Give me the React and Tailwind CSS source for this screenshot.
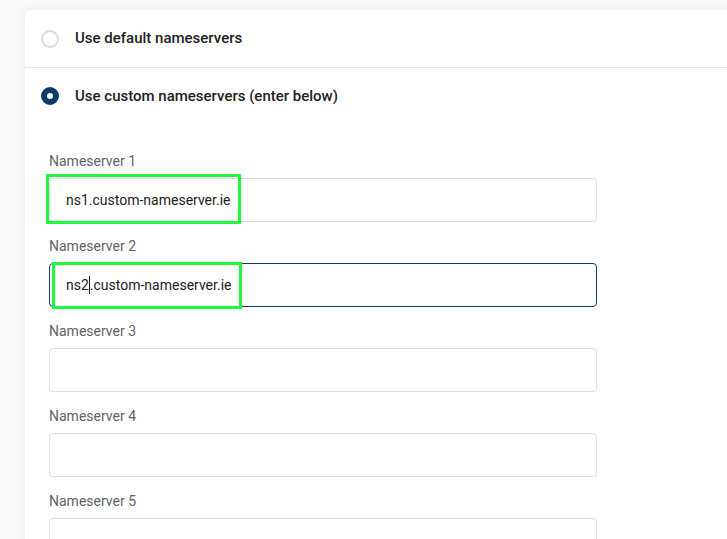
import React from 'react';

const servers = ['ns1.custom-nameserver.ie', 'ns2.custom-nameserver.ie', '', '', ''];

const Field = ({ index, value }) => {
  const focused = index === 1;
  return (
    <div className="flex flex-col">
      <label className="text-[14px] leading-5 text-[#5f6368]">Nameserver {index + 1}</label>
      <div
        className={`relative mt-[7px] h-[44px] w-[548px] rounded-[4px] border bg-white pl-[16px] flex items-center text-[14px] text-[#222] ${
          focused ? 'border-[#0b3a6b]' : 'border-[#dedede]'
        }`}
      >
        {focused ? (
          <span>
            ns2<span className="inline-block w-px h-[18px] bg-[#111] align-middle -mt-[2px]" />.custom-nameserver.ie
          </span>
        ) : (
          <span>{value}</span>
        )}
        {index === 0 && (
          <div className="absolute left-[-4px] top-[-5px] w-[195px] h-[50px] border-[3px] border-[#1cfc3c] pointer-events-none" />
        )}
        {index === 1 && (
          <div className="absolute left-[2px] top-[-2px] w-[190px] h-[47px] border-[3px] border-[#1cfc3c] pointer-events-none" />
        )}
      </div>
    </div>
  );
};

const App = () => {
  return (
    <div className="min-h-screen bg-[#fafafa] pl-[25px] pt-[10px] overflow-hidden" style={{ fontFamily: 'Roboto, "Liberation Sans", sans-serif' }}>
      <div className="w-[720px] min-h-[560px] bg-white rounded-tl-[6px] shadow-[0_0_12px_rgba(0,0,0,0.06)]">
        <div className="flex items-center gap-4 pl-4 h-[58px] border-b border-[#e6e6e6]">
          <span className="w-[18px] h-[18px] rounded-full border-2 border-[#dcdcdc]" />
          <span className="text-[15px] font-medium text-[#222]">Use default nameservers</span>
        </div>
        <div className="flex items-center gap-4 pl-4 h-[56px]">
          <span className="w-[18px] h-[18px] rounded-full border-[6px] border-[#0b3a6b] bg-white" />
          <span className="text-[15px] font-medium text-[#222]">Use custom nameservers (enter below)</span>
        </div>
        <div className="pl-6 pt-[27px] flex flex-col gap-[14px]">
          {servers.map((v, i) => (
            <Field key={i} index={i} value={v} />
          ))}
        </div>
      </div>
    </div>
  );
};

export default App;
